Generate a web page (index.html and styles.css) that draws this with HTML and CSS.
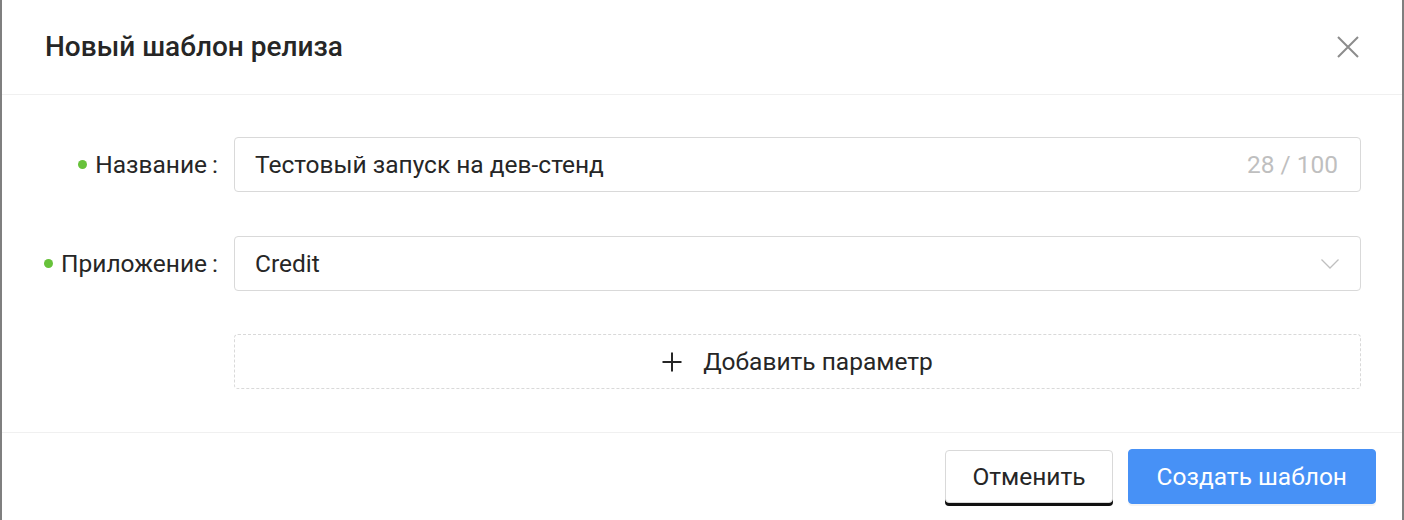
FILE: index.html
```html
<!DOCTYPE html>
<html lang="ru">
<head>
<meta charset="utf-8">
<title>Новый шаблон релиза</title>
<link rel="stylesheet" href="styles.css">
</head>
<body>
<div class="modal">
  <div class="modal-header">
    <div class="modal-title">Новый шаблон релиза</div>
    <button class="modal-close" aria-label="Закрыть">
      <svg width="22" height="22" viewBox="0 0 22 22"><path d="M1 1L21 21M21 1L1 21" stroke="#8c8c8c" stroke-width="2" fill="none"/></svg>
    </button>
  </div>
  <div class="modal-body">
    <div class="form-item">
      <div class="form-label"><span class="req-dot"></span><span class="label-text">Название</span><span class="colon">:</span></div>
      <div class="form-control">
        <div class="input">
          <span class="input-value">Тестовый запуск на дев-стенд</span>
          <span class="input-count">28 / 100</span>
        </div>
      </div>
    </div>
    <div class="form-item">
      <div class="form-label"><span class="req-dot"></span><span class="label-text">Приложение</span><span class="colon">:</span></div>
      <div class="form-control">
        <div class="input select">
          <span class="input-value">Credit</span>
          <svg class="chevron" width="18" height="10" viewBox="0 0 18 10"><path d="M0.5 0.5L9 9L17.5 0.5" stroke="#bfbfbf" stroke-width="1.3" fill="none"/></svg>
        </div>
      </div>
    </div>
    <div class="form-item last">
      <div class="form-label"></div>
      <div class="form-control">
        <button class="add-btn">
          <svg width="20" height="20" viewBox="0 0 20 20"><path d="M10 0.5V19.5M0.5 10H19.5" stroke="#262626" stroke-width="2" fill="none"/></svg>
          <span>Добавить параметр</span>
        </button>
      </div>
    </div>
  </div>
  <div class="modal-footer">
    <button class="btn btn-default">Отменить</button>
    <button class="btn btn-primary">Создать шаблон</button>
  </div>
</div>
</body>
</html>
```
FILE: styles.css
```css
html, body {
  margin: 0;
  padding: 0;
  height: 100%;
}
body {
  background: #7f7f7f;
  font-family: Roboto, "Liberation Sans", "Noto Sans", sans-serif;
  color: #262626;
  overflow: hidden;
}
.modal {
  margin-left: 2px;
  width: 1400px;
  height: 100%;
  background: #fff;
}
.modal-header {
  height: 94px;
  border-bottom: 1px solid #f0f0f0;
  display: flex;
  align-items: center;
  justify-content: space-between;
  padding: 0 43px 0 43px;
  box-sizing: content-box;
}
.modal-title {
  font-size: 28px;
  font-weight: 500;
  color: #262626;
  line-height: 36px;
}
.modal-close {
  border: 0;
  background: none;
  padding: 0;
  width: 22px;
  height: 22px;
  display: flex;
  cursor: pointer;
}
.modal-body {
  padding: 42px 41px 43px 0;
}
.form-item {
  display: flex;
  align-items: center;
  margin-bottom: 44px;
}
.form-item:nth-child(2) {
  margin-bottom: 43px;
}
.form-item.last {
  margin-bottom: 0;
}
.form-label {
  width: 232px;
  flex: none;
  display: flex;
  align-items: center;
  justify-content: flex-end;
  font-size: 24.5px;
  color: #262626;
  padding-right: 16px;
  box-sizing: border-box;
}
.req-dot {
  width: 9px;
  height: 9px;
  border-radius: 50%;
  background: #67c23a;
  margin-right: 8px;
}
.colon {
  margin-left: 5px;
}
.form-control {
  flex: 1;
}
.input {
  height: 55px;
  box-sizing: border-box;
  border: 1px solid #d9d9d9;
  border-radius: 4px;
  display: flex;
  align-items: center;
  justify-content: space-between;
  padding: 0 22px 0 20px;
  font-size: 24.5px;
}
.input-value {
  color: #262626;
}
.input-count {
  color: #bfbfbf;
}
.select {
  padding-right: 21px;
}
.chevron {
  display: block;
}
.add-btn {
  width: 100%;
  height: 55px;
  border: 1px dashed #d9d9d9;
  border-radius: 4px;
  background: #fff;
  display: flex;
  align-items: center;
  justify-content: center;
  gap: 21px;
  font-family: inherit;
  font-size: 24.5px;
  color: #262626;
  padding: 0;
}
.modal-footer {
  border-top: 1px solid #f0f0f0;
  display: flex;
  justify-content: flex-end;
  gap: 15px;
  padding: 16px 26px;
}
.btn {
  height: 55px;
  font-family: inherit;
  font-size: 24.5px;
  border-radius: 4px;
  padding: 0 28px;
  cursor: pointer;
}
.btn-default {
  margin-top: 1px;
  height: 53px;
  padding: 0 26px;
  background: #fff;
  color: #262626;
  border: 1px solid #d9d9d9;
  box-shadow: 0 3px 0 #111;
}
.btn-primary {
  background: #4791f6;
  color: #fff;
  border: 1px solid #4791f6;
  box-shadow: 0 2px 0 rgba(0, 0, 0, 0.045);
}
```
